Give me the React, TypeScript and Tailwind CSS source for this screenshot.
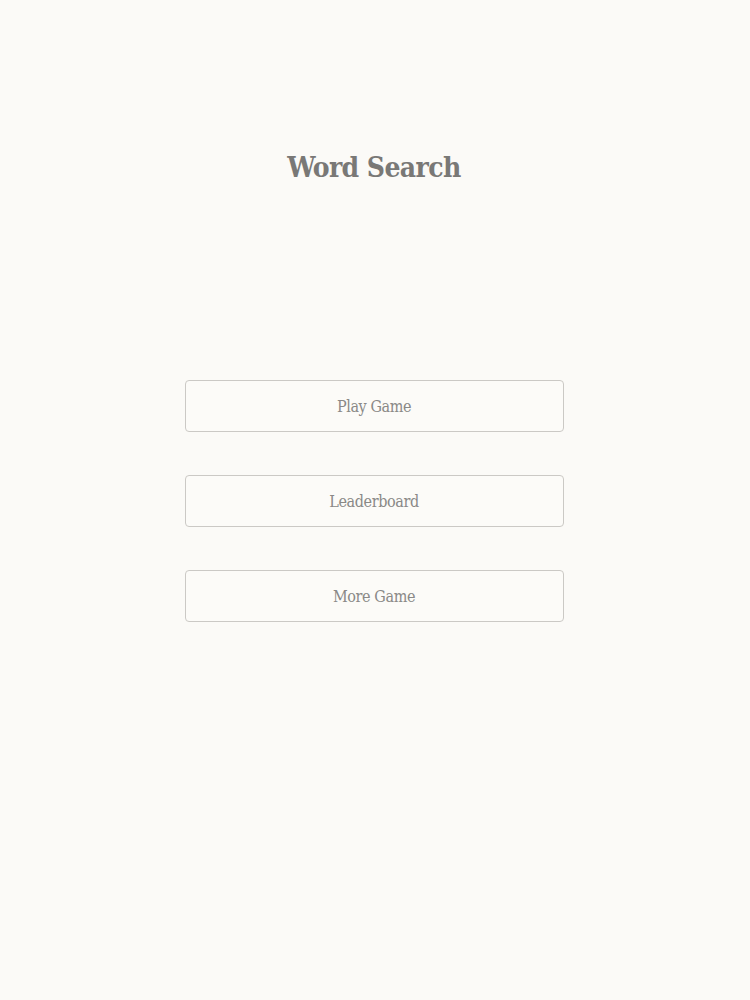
export default function App() {
  const items = ['Play Game', 'Leaderboard', 'More Game'];
  return (
    <div
      className="min-h-[1000px] w-full bg-[#fbfaf7] flex flex-col items-center"
      style={{ fontFamily: '"DejaVu Serif Condensed", "DejaVu Serif", "Liberation Serif", serif' }}
    >
      <h1 className="mt-[150px] mr-[2px] h-[36px] text-[28px] leading-[36px] font-bold text-[#797876] tracking-[-0.6px]">
        Word Search
      </h1>
      <div className="mt-[194px] mr-[2px] flex flex-col gap-[43px]">
        {items.map((label) => (
          <button
            key={label}
            className="w-[379px] h-[52px] rounded-[4px] border-[1.5px] border-[#cbc9c5] bg-[#fcfbf8] pt-[1px] text-[16px] text-[#8a8987] tracking-[-0.4px]"
          >
            {label}
          </button>
        ))}
      </div>
    </div>
  );
}
